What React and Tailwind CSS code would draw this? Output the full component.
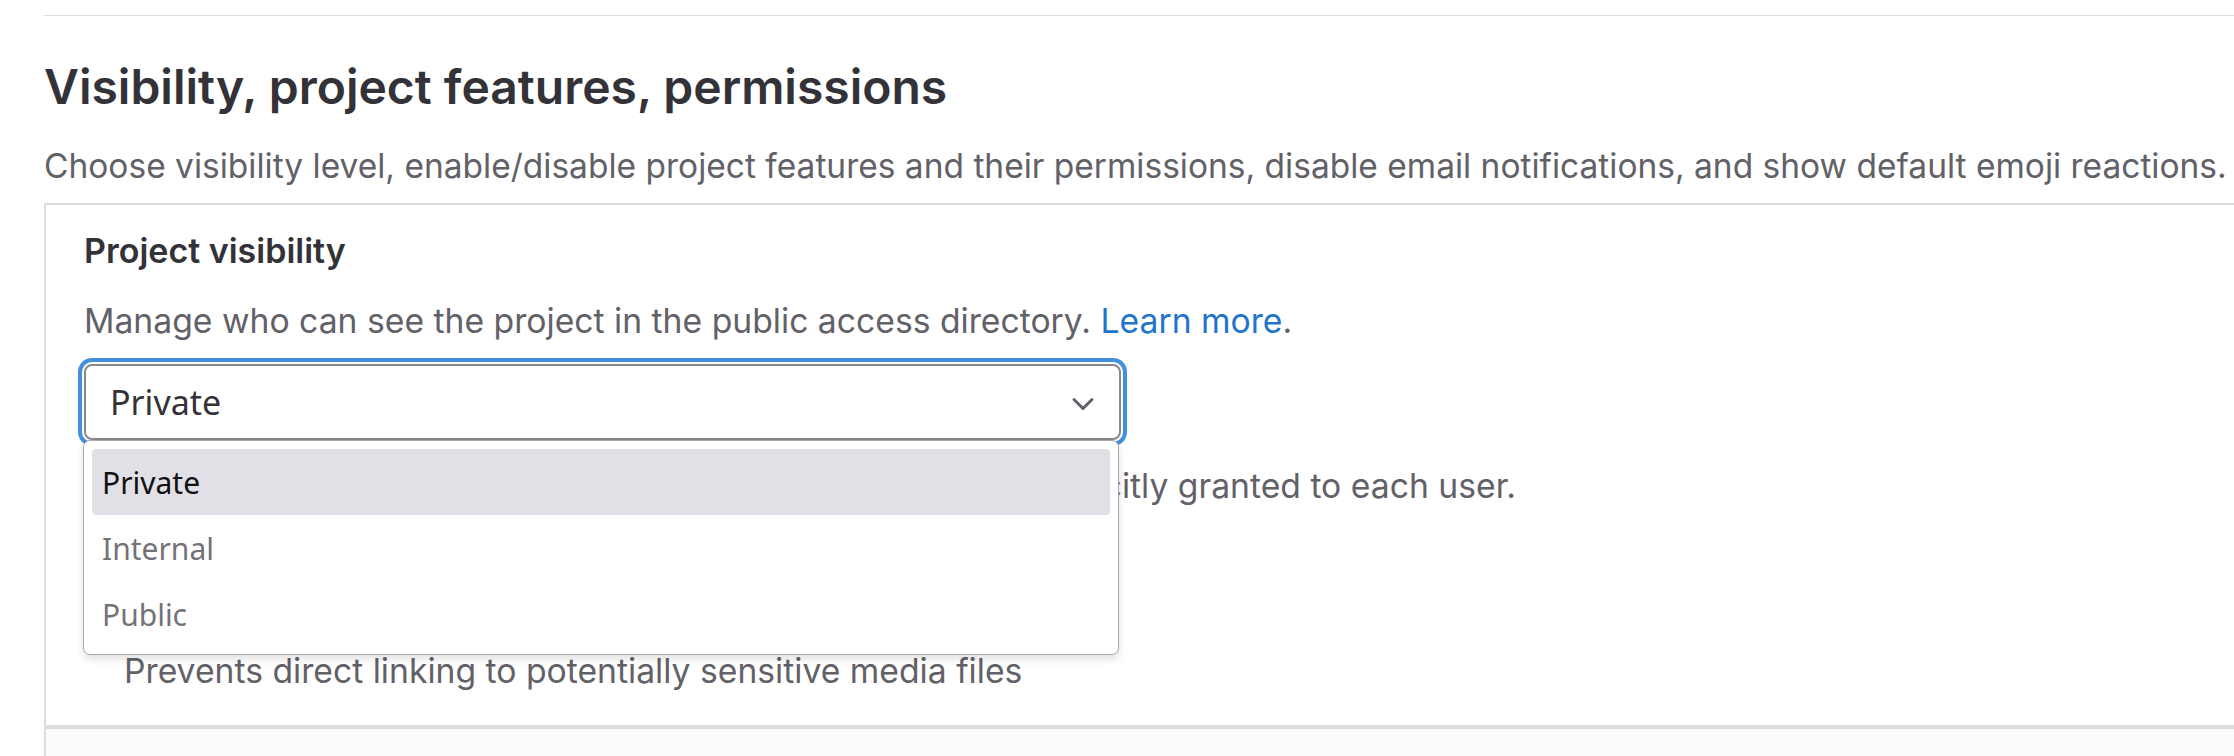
import { ChevronDown } from 'lucide-react';

const options = ['Private', 'Internal', 'Public'];

export default function App() {
  return (
    <div className="min-h-screen bg-white font-['Inter','Liberation_Sans',sans-serif] overflow-hidden">
      <section className="ml-[44px] mt-[15px] border-t border-[#dcdcde]">
        {/* Section header */}
        <h2 className="pt-[41px] text-[48px] leading-[60px] font-semibold text-[#333238] whitespace-nowrap">
          Visibility, project features, permissions
        </h2>
        <p className="mt-[29px] text-[33.5px] leading-[40px] text-[#626168] whitespace-nowrap">
          Choose visibility level, enable/disable project features and their permissions, disable email notifications, and show default emoji reactions.
        </p>

        {/* Settings card */}
        <div className="mt-[17px] border-2 border-[#dcdcde] border-r-0">
          <div className="px-[38px] pt-[22px] pb-[30px] border-b-2 border-[#dcdcde]">
            <h4 className="text-[34px] leading-[48px] font-semibold text-[#333238]">Project visibility</h4>
            <p className="mt-[22px] text-[33.7px] leading-[48px] text-[#626168] whitespace-nowrap">
              Manage who can see the project in the public access directory.{' '}
              <a className="text-[#1f75cb]">Learn more</a>.
            </p>

            <div className="relative mt-[19px] w-[1037px]">
              <div className="h-[76px] flex items-center justify-between border-2 border-[#89888d] rounded-[8px] bg-white shadow-[0_0_0_2px_#fff,0_0_0_6px_#428fdc] pl-[24px] pr-[18px]">
                <span className="text-[34px] text-[#333238] font-['Noto_Sans','DejaVu_Sans',sans-serif]">Private</span>
                <ChevronDown size={36} strokeWidth={2} className="text-[#626168] mt-[4px]" />
              </div>

              {/* Open native-style listbox */}
              <div className="absolute z-10 left-[-1px] top-full w-[1036px] bg-white border border-[#a8a8ab] rounded-[7px] shadow-[0_4px_8px_rgba(0,0,0,0.12)] px-[8px] pt-[8px] pb-[7px] font-['Noto_Sans','DejaVu_Sans',sans-serif]">
                {options.map((opt, i) => (
                  <div
                    key={opt}
                    className={
                      i === 0
                        ? 'h-[66px] flex items-center pl-[10px] rounded-[4px] bg-[#e0e0e6] text-[30px] text-[#111111]'
                        : 'h-[66px] flex items-center pl-[10px] text-[30px] text-[#737278]'
                    }
                  >
                    {opt}
                  </div>
                ))}
              </div>
            </div>

            <p className="mt-[22px] text-[33.7px] leading-[48px] text-[#626168] whitespace-nowrap">
              Only accessible by project members. Membership must be explicitly granted to each user.
            </p>

            <div className="mt-[137px] pl-[40px]">
              <p className="text-[33.7px] leading-[48px] text-[#626168] whitespace-nowrap">
                Prevents direct linking to potentially sensitive media files
              </p>
            </div>
          </div>
          <div className="h-[40px] border-t-2 border-[#dcdcde] bg-[#fbfafd]" />
        </div>
      </section>
    </div>
  );
}
